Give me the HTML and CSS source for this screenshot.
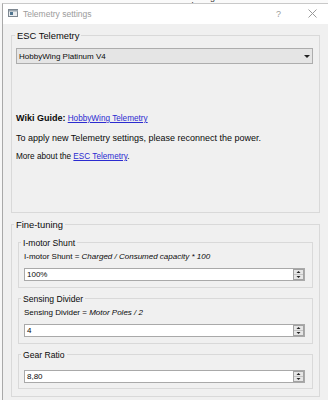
FILE: index.html
```html
<!DOCTYPE html>
<html lang="en">
<head>
    <meta charset="UTF-8">
    <meta name="viewport" content="width=device-width, initial-scale=1.0">
    <title>Telemetry settings</title>
    <link rel="stylesheet" href="styles.css">
</head>
<body>
    <div class="screen">
        <div class="backdrop">
            <span class="backdrop-label">Calibrating Leeches</span>
        </div>

        <div class="main">
            <div class="edge"></div>

            <div class="window">
                <div class="titlebar">
                    <svg class="app-icon" width="10" height="8" viewBox="0 0 10 8">
                        <rect x="0.5" y="0.5" width="9" height="7" fill="#e9ecef" stroke="#7d8790"/>
                        <rect x="1" y="1" width="9" height="1.5" fill="#9aa6b0"/>
                        <rect x="2" y="3" width="3" height="3" fill="#4f7590"/>
                    </svg>
                    <span class="title">Telemetry settings</span>
                    <span class="help">?</span>
                    <svg class="close" width="9" height="9" viewBox="0 0 9 9">
                        <path d="M0.5 0.5 L8.5 8.5 M8.5 0.5 L0.5 8.5" stroke="#9a9a9a" stroke-width="1"/>
                    </svg>
                </div>

                <div class="content">
                    <fieldset class="group group-esc">
                        <legend>ESC Telemetry</legend>
                        <div class="combo">
                            <span>HobbyWing Platinum V4</span>
                            <span class="combo-arrow"></span>
                        </div>
                        <div class="info">
                            <p><b>Wiki Guide:</b> <a href="#">HobbyWing Telemetry</a></p>
                            <p class="note">To apply new Telemetry settings, please reconnect the power.</p>
                            <p>More about the <a href="#">ESC Telemetry</a>.</p>
                        </div>
                    </fieldset>

                    <fieldset class="group group-tuning">
                        <legend>Fine-tuning</legend>

                        <fieldset class="subgroup">
                            <legend>I-motor Shunt</legend>
                            <p class="formula">I-motor Shunt = <i>Charged / Consumed capacity * 100</i></p>
                            <div class="spin">
                                <span>100%</span>
                                <svg class="spin-buttons" width="11" height="11" viewBox="0 0 11 11">
                                    <rect x="0.5" y="0.5" width="10" height="10" fill="#e6e6e6" stroke="#a3a3a3"/>
                                    <path d="M1 5.5 H10" stroke="#c4c4c4"/>
                                    <path d="M3.5 4 L5.5 2 L7.5 4 Z" fill="#222"/>
                                    <path d="M3.5 7 L5.5 9 L7.5 7 Z" fill="#222"/>
                                </svg>
                            </div>
                        </fieldset>

                        <fieldset class="subgroup">
                            <legend>Sensing Divider</legend>
                            <p class="formula">Sensing Divider = <i>Motor Poles / 2</i></p>
                            <div class="spin">
                                <span>4</span>
                                <svg class="spin-buttons" width="11" height="11" viewBox="0 0 11 11">
                                    <rect x="0.5" y="0.5" width="10" height="10" fill="#e6e6e6" stroke="#a3a3a3"/>
                                    <path d="M1 5.5 H10" stroke="#c4c4c4"/>
                                    <path d="M3.5 4 L5.5 2 L7.5 4 Z" fill="#222"/>
                                    <path d="M3.5 7 L5.5 9 L7.5 7 Z" fill="#222"/>
                                </svg>
                            </div>
                        </fieldset>

                        <fieldset class="subgroup subgroup-plain">
                            <legend>Gear Ratio</legend>
                            <div class="spin">
                                <span>8,80</span>
                                <svg class="spin-buttons" width="11" height="11" viewBox="0 0 11 11">
                                    <rect x="0.5" y="0.5" width="10" height="10" fill="#e6e6e6" stroke="#a3a3a3"/>
                                    <path d="M1 5.5 H10" stroke="#c4c4c4"/>
                                    <path d="M3.5 4 L5.5 2 L7.5 4 Z" fill="#222"/>
                                    <path d="M3.5 7 L5.5 9 L7.5 7 Z" fill="#222"/>
                                </svg>
                            </div>
                        </fieldset>
                    </fieldset>
                </div>
            </div>
        </div>
    </div>
</body>
</html>
```

FILE: styles.css
```css
* {
    margin: 0;
    padding: 0;
    box-sizing: border-box;
}

body {
    font-family: 'Liberation Sans', Arial, sans-serif;
    font-size: 8px;
    color: #0a0a0a;
    background: #ffffff;
    width: 328px;
    height: 400px;
    overflow: hidden;
}

.screen {
    display: flex;
    flex-direction: column;
    height: 400px;
}

/* window behind the dialog */
.backdrop {
    height: 3px;
    overflow: hidden;
    padding-left: 172px;
    background: #fafafa;
}

.backdrop-label {
    display: block;
    width: 68px;
    font-size: 9px;
    line-height: 9px;
    margin-top: -7px;
    border-bottom: 1px solid #555;
    color: #333;
}

.main {
    display: flex;
    flex: 1;
}

.edge {
    width: 2px;
    background: #f7f7f7;
}

.window {
    flex: 1;
    display: flex;
    flex-direction: column;
    background: #f0f0f0;
    border-left: 1px solid #a9a9a9;
    border-top: 1px solid #c9c9c9;
}

/* title bar */
.titlebar {
    height: 20px;
    background: #ffffff;
    display: flex;
    align-items: center;
    padding: 0 11px 1px 5px;
}

.app-icon {
    margin-right: 5px;
    margin-top: -1px;
}

.title {
    font-size: 8.5px;
    color: #9b9b9b;
}

.help {
    margin-left: auto;
    margin-right: 27px;
    font-size: 9px;
    color: #9b9b9b;
}

/* group boxes */
.content {
    padding: 5px 8px 0 8px;
}

fieldset {
    border: 1px solid #d9d9d9;
    min-width: 0;
}

legend {
    font-size: 8.6px;
    line-height: 10px;
    padding: 2px 2px 0 2px;
}

.group > legend {
    font-size: 9.4px;
}

.group-esc {
    padding: 7px 6px 49px 4px;
}

.group-esc legend {
    margin-left: -1px;
}

.group-tuning {
    margin-top: 5px;
    padding: 6px 6px 7px 6px;
}

.group-tuning > legend {
    margin-left: -4px;
}

.subgroup {
    padding: 3px 7px 6px 5px;
}

.subgroup + .subgroup {
    margin-top: 4px;
}

.subgroup legend {
    margin-left: -3px;
}

.subgroup-plain {
    padding-top: 5px;
    padding-bottom: 5px;
}

/* controls */
.combo {
    height: 16px;
    display: flex;
    align-items: center;
    padding: 0 2px 0 2px;
    background: #e5e5e5;
    border: 1px solid #adadad;
}

.combo-arrow {
    margin-left: auto;
    border-left: 3px solid transparent;
    border-right: 3px solid transparent;
    border-top: 3px solid #222;
}

.info {
    margin-top: 48px;
    display: flex;
    flex-direction: column;
    gap: 7px;
    font-size: 8.2px;
}

.info b,
.info .note {
    font-size: 9px;
}

.info p,
.formula {
    line-height: 12px;
}

a {
    color: #2b2bd0;
    text-decoration: underline;
}

.spin {
    height: 13px;
    margin-top: 5px;
    display: flex;
    align-items: center;
    padding-left: 2px;
    background: #ffffff;
    border: 1px solid #a9a9a9;
}

.spin-buttons {
    margin-left: auto;
}
```
